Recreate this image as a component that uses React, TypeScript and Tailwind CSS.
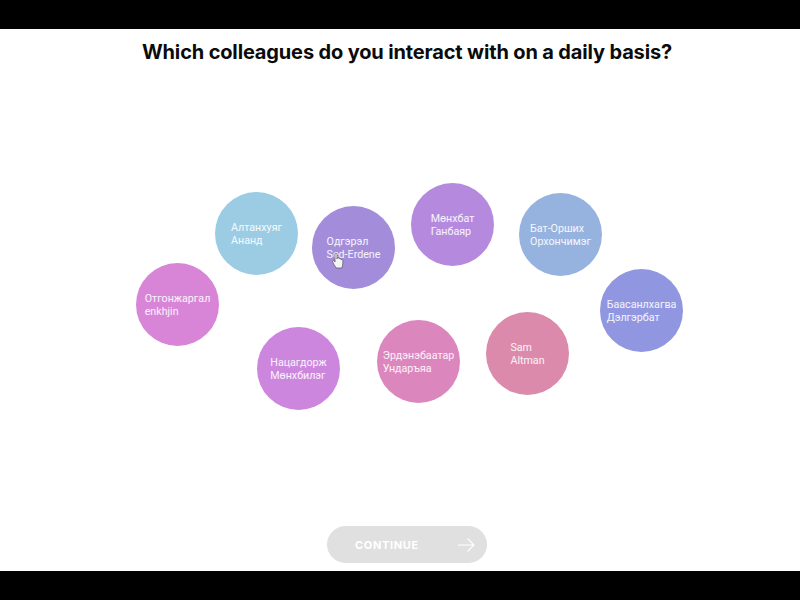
import React from 'react';

const COLLEAGUES = [
  { first: 'Алтанхуяг', last: 'Ананд', pos: 'left-[215px] top-[127px] bg-[#9ccce3]' },
  { first: 'Одгэрэл', last: 'Sed-Erdene', pos: 'left-[312px] top-[141px] bg-[#a38ddb]' },
  { first: 'Отгонжаргал', last: 'enkhjin', pos: 'left-[136px] top-[198px] bg-[#d885d8]' },
  { first: 'Нацагдорж', last: 'Мөнхбилэг', pos: 'left-[257px] top-[262px] bg-[#cc86de]' },
  { first: 'Мөнхбат', last: 'Ганбаяр', pos: 'left-[411px] top-[118px] bg-[#b58ade]' },
  { first: 'Бат-Орших', last: 'Орхончимэг', pos: 'left-[519px] top-[128px] bg-[#96b2df]' },
  { first: 'Баасанлхагва', last: 'Дэлгэрбат', pos: 'left-[600px] top-[204px] bg-[#9097e0]' },
  { first: 'Эрдэнэбаатар', last: 'Ундаръяа', pos: 'left-[377px] top-[255px] bg-[#dc86be]' },
  { first: 'Sam', last: 'Altman', pos: 'left-[486px] top-[247px] bg-[#db8aab]' },
];

function HandCursor() {
  return (
    <svg className="absolute left-[20px] top-[47px]" width="12" height="16" viewBox="0 0 12 16">
      <path
        d="M3 1.2c0-1.3 2-1.3 2 0V6l.2-.9c.2-1 1.8-.9 1.9.2l.1.7c.2-.9 1.7-.8 1.8.3l.1.6c.3-.7 1.6-.5 1.7.4.2 1.7.1 3.6-.3 5L10 15H4.2L1.6 11 .6 8.6c-.4-1 1-1.7 1.6-.8L3 9V1.2z"
        fill="#f4f4f4"
        stroke="#555"
        strokeWidth="0.7"
      />
    </svg>
  );
}

export default function App() {
  return (
    <div className="h-screen flex flex-col bg-white font-['Roboto',sans-serif]">
      <div className="h-[29px] bg-black" />

      <main className="flex-1 flex flex-col">
        {/* Question */}
        <h1 className="pl-[14px] pt-[9px] h-[36px] text-center text-[20px] leading-[28px] font-bold tracking-[-0.15px] text-[#0b0b0b] font-['Inter',sans-serif]">
          Which colleagues do you interact with on a daily basis?
        </h1>

        {/* Bubbles */}
        <div className="flex-1 relative">
          {COLLEAGUES.map((c) => (
            <div
              key={c.first}
              className={`absolute w-[83px] h-[83px] rounded-full flex items-center justify-center pt-px text-[10.7px] leading-[13px] text-white/90 ${c.pos}`}
            >
              <div>
                <div>{c.first}</div>
                <div>{c.last}</div>
              </div>
              {c.first === 'Одгэрэл' && <HandCursor />}
            </div>
          ))}
        </div>

        {/* Continue */}
        <button className="ml-[327px] mb-[8px] w-[160px] h-[37px] rounded-full bg-[#e0e0e0] flex items-center justify-between pl-[28px] pr-[12px] pt-px text-white text-[11px] font-bold tracking-[0.65px] font-['Inter',sans-serif]">
          <span>CONTINUE</span>
          <svg width="17" height="16" viewBox="0 0 17 16" fill="none" stroke="#fff" strokeWidth="1.1">
            <path d="M0 8h16M9.500 1.500l6.500 6.500-6.500 6.500" />
          </svg>
        </button>
      </main>

      <div className="h-[29px] bg-black" />
    </div>
  );
}
